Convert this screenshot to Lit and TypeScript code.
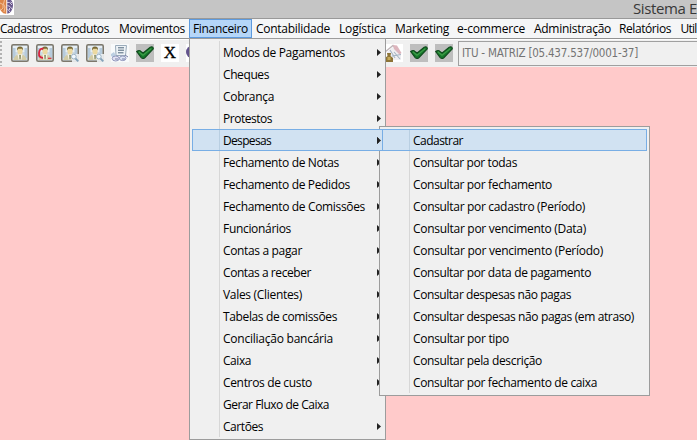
import { LitElement, html, css, svg, nothing } from "lit";
import { customElement, property } from "lit/decorators.js";

type Entry = [label: string, width: number, leaf?: boolean];

// label, text width, width of the whole bar entry
const BAR: [string, number, number][] = [
  ["Cadastros", 52, 57], ["Produtos", 48, 58], ["Movimentos", 66, 74], ["Financeiro", 55, 63],
  ["Contabilidade", 74, 83], ["Logística", 47, 56], ["Marketing", 54, 62], ["e-commerce", 68, 77],
  ["Administração", 77, 85], ["Relatórios", 52, 61.5], ["Util", 16, 21],
];
const MENU: Entry[] = [
  ["Modos de Pagamentos", 122], ["Cheques", 46], ["Cobrança", 51], ["Protestos", 49],
  ["Despesas", 48], ["Fechamento de Notas", 116], ["Fechamento de Pedidos", 127],
  ["Fechamento de Comissões", 142], ["Funcionários", 68], ["Contas a pagar", 79],
  ["Contas a receber", 88], ["Vales (Clientes)", 79], ["Tabelas de comissões", 114],
  ["Conciliação bancária", 110], ["Caixa", 28], ["Centros de custo", 89],
  ["Gerar Fluxo de Caixa", 106, true], ["Cartões", 40],
];
const SUBMENU: Entry[] = [
  ["Cadastrar", 50, true], ["Consultar por todas", 104, true],
  ["Consultar por fechamento", 139, true], ["Consultar por cadastro (Período)", 172, true],
  ["Consultar por vencimento (Data)", 173, true], ["Consultar por vencimento (Período)", 190, true],
  ["Consultar por data de pagamento", 178, true], ["Consultar despesas não pagas", 158, true],
  ["Consultar despesas não pagas (em atraso)", 221, true], ["Consultar por tipo", 96, true],
  ["Consultar pela descrição", 129, true], ["Consultar por fechamento de caixa", 184, true],
];

/** A label whose tracking is adjusted to fill a given width. */
@customElement("fit-label")
class FitLabel extends LitElement {
  @property() text = "";
  @property({ type: Number }) width = 0;
  static styles = css`
    :host { display: inline-block; white-space: pre; flex: none; }
  `;
  render() { return html`<span>${this.text}</span>`; }
  updated() {
    const span = this.renderRoot.querySelector("span") as HTMLElement;
    span.style.letterSpacing = "0";
    const natural = span.getBoundingClientRect().width;
    span.style.letterSpacing = `${(this.width - natural) / this.text.length}px`;
    this.style.width = `${this.width}px`;
  }
}

const frame = svg`
  <rect x=".75" y=".75" width="16.5" height="16.5" rx="1.5" fill="#cfdae2" stroke="#7d786c" stroke-width="1.5"/>
  <path d="M2 2H16V8H2Z" fill="#e6eef4"/><path d="M2 4H4.5V14H2ZM13.5 4H16V14H13.5Z" fill="#b6cbdc"/>
  <path d="M2.5 16Q3 11.5 7 10.5H11Q15 11.5 15.5 16Z" fill="#d2cca6"/>
  <path d="M6.5 10.3H11.5L10.3 16H7.7Z" fill="#f8f5e6"/><path d="M8.4 11H9.7L9.5 15.5H8.6Z" fill="#5d6638"/>
  <ellipse cx="9" cy="7" rx="2.6" ry="3.5" fill="#ecd9a0"/>
  <path d="M6.2 6.6Q5.4 2.4 9 2.4T11.9 6.6L11 4.8H7.3Z" fill="#7a6a35"/>`;
const lens = svg`<path d="M11 10H18V18H11Z" fill="#eef1f3" opacity=".9"/>
  <path d="M14 14L17.3 17.3" stroke="#83a2ba" stroke-width="1.8"/>
  <circle cx="12.8" cy="12.6" r="2.4" fill="#f0f8ff" stroke="#9cb3c3"/>`;
const icons: Record<string, unknown> = {
  user: frame,
  cuser: svg`${frame}<path d="M7.5 4.6Q3.4 4 3 9T7 13.8" fill="none" stroke="#d8213d" stroke-width="1.8"/>
    <path d="M12 14.3H15.5" stroke="#d4213d" stroke-width="1.1"/>`,
  find: svg`${frame}${lens}`,
  doc: svg`<rect width="18" height="18" fill="#f8fafb"/>
    <path d="M4.5 1.5H15.5L14.5 11.5H5Z" fill="#eef3f7" stroke="#9aabba"/>
    <path d="M7 3.8H13M7 6.2H13M7 8.8H12.5" stroke="#4f6679"/>
    <path d="M0 10L3 8L5 12L3 14L0 12Z" fill="#bccfe2"/>
    <ellipse cx="4.7" cy="14.5" rx="3.5" ry="2.5" fill="#e3e2f2" stroke="#9298bd"/>
    <ellipse cx="11.7" cy="14.3" rx="3.3" ry="2.3" fill="#dce4f4" stroke="#9298bd"/>
    <path d="M4 15H7M11 15H14M14 11L17 13" stroke="#7881a9"/>`,
  check: svg`<rect width="18" height="18" fill="#bebebe"/>
    <path d="M.8 7.5Q3.3 5.5 5.2 7.8L7.2 9L14.2 3.2Q17 2 17.3 4.8L8.8 13.7Q6.8 15.2 5.2 13.6Z" fill="#167a2c" stroke="#104b1d" stroke-width="1.2"/>
    <path d="M2.8 7.8L7 11.3L15.3 4.6" fill="none" stroke="#3f9c48" stroke-width="1.2"/>`,
  x: svg`<rect width="18" height="18" fill="#fff"/>`,
  ball: svg`<rect width="18" height="18" fill="#fff"/><circle cx="6.5" cy="8" r="6.5" fill="#62538c"/>`,
  house: svg`<rect width="18" height="18" fill="#fff"/>
    <path d="M1 9L8 3L16 10V16H4V9Z" fill="#efeef1"/>
    <path d="M0 8L8 1.5L11 5" fill="none" stroke="#bdb3b6" stroke-width="1.3"/>
    <path d="M8 1L12 1.5L16.5 9L14.5 10.5L9 5Z" fill="#dcb4bc"/>
    <path d="M9 8L15 15M7 12L16 10.5M5 6L10 14" stroke="#a5b4c2" stroke-width="1.1"/>
    <path d="M2 9H6L5.5 12L8 14V18H0V14L2.5 12Z" fill="#8d7437"/>
    <path d="M2.5 13H5.5V16H2.5Z" fill="#c7aa58"/>`,
};

@customElement("tool-icon")
class ToolIcon extends LitElement {
  @property() name = "";
  static styles = css`
    :host { display: grid; width: 18px; height: 18px; flex: none; }
    svg, b { grid-area: 1 / 1; }
    b { font: 400 17px/18px "Liberation Serif", serif; text-align: center; color: #000; -webkit-text-stroke: .3px #000; }
  `;
  render() {
    return html`<svg width="18" height="18" viewBox="0 0 18 18">${icons[this.name]}</svg>
      ${this.name === "x" ? html`<b>X</b>` : nothing}`;
  }
}

@customElement("menu-panel")
class MenuPanel extends LitElement {
  @property({ attribute: false }) items: Entry[] = [];
  @property({ type: Number }) active = -1;
  static styles = css`
    :host {
      display: block; box-sizing: border-box; border: 1px solid #9c9c9c; padding: 2px;
      background: linear-gradient(#d7d7d7, #d7d7d7) 29px 2px / 1px calc(100% - 4px) no-repeat #f0f0f0;
    }
    .row { display: flex; align-items: center; justify-content: space-between; height: 22px; box-sizing: border-box;
      border: 1px solid transparent; padding: 0 1px 0 30px; }
    .active { border-color: #78aee5; background: linear-gradient(#b9cfe2, #b9cfe2) 26px 0 / 1px 100% no-repeat #d1e2f2; }
    fit-label { padding-top: 2px; }
    svg { flex: none; }
  `;
  render() {
    return this.items.map(([label, width, leaf], i) => html`
      <div class="row ${i === this.active ? "active" : ""}">
        <fit-label .text=${label} .width=${width}></fit-label>
        ${leaf ? nothing : html`<svg width="4" height="7" viewBox="0 0 4 7"><path d="M0 0L4 3.5L0 7Z" fill="#222"/></svg>`}
      </div>`);
  }
}

@customElement("app-root")
class AppRoot extends LitElement {
  static styles = css`
    :host { display: flex; flex-direction: column; position: relative; width: 697px; height: 440px; overflow: hidden;
      background: #ffcaca; color: #000; font: 12px/20px "Open Sans", "Noto Sans", sans-serif; }
    .title { height: 18px; flex: none; background: #c5c5c5; border-bottom: 1px solid #999; display: flex; justify-content: space-between; }
    .logo { flex: none; }
    .caption { font-size: 15px; line-height: 17px; color: #383838; }
    .bar { height: 19px; flex: none; background: #f5f6f7; border-bottom: 1px solid #929292; display: flex; align-items: stretch; line-height: 19px; }
    .entry { flex: none; box-sizing: border-box; padding-left: 4px; }
    .entry:first-child { padding-left: 0; }
    .open { background: #b5d6f8; outline: 1px solid #5c9ade; outline-offset: -1px; }
    .tools { height: 28px; box-sizing: border-box; border-top: 1px solid #fff; flex: none; background: #f0f0f0; display: flex; align-items: center; }
    .grip { width: 2px; height: 25px; margin-right: 9px; background: repeating-linear-gradient(#b2b2b2 0 2px, transparent 2px 4px); }
    .set { display: flex; gap: 7px; padding-bottom: 1px; }
    .right { margin-left: 181px; }
    .field { margin-left: 5px; flex: 1; height: 25px; box-sizing: border-box; border: 1px solid #a0a0a0; border-right: 0; padding-left: 3px;
      color: #737373; line-height: 22px; font-size: 11.5px; font-stretch: condensed; font-family: "DejaVu Sans Condensed", "DejaVu Sans", sans-serif; }
    .menu { position: absolute; left: 189px; top: 38px; width: 197px; height: 402px; }
    .submenu { position: absolute; left: 379px; top: 126px; width: 271px; height: 270px; }
    .bridge { position: absolute; left: 379px; top: 129px; width: 3px; height: 22px; box-sizing: border-box;
      border: solid #78aee5; border-width: 1px 0; background: #d1e2f2; }
    .bridge svg { display: block; margin: 7px 0 0 -2px; }
  `;
  render() {
    const tools = ["user", "cuser", "find", "find", "doc", "check", "x", "ball"];
    return html`
      <div class="title">
        <svg class="logo" width="14" height="15" viewBox="0 0 14 15">
          <rect width="14" height="15" fill="#fff"/>
          <path d="M6.3 0V13.8Q3 14 1.5 11.5Q0 10 0 8V0Z" fill="#dd8447"/>
          <path d="M0 3L3 4.5V8L1 10M4.5 0L3.5 4L5 7L4 12" fill="none" stroke="#f6cfae" stroke-width=".8"/>
          <path d="M7.3 0H11Q13.6 3 12.8 7Q12 12.5 7.3 13.8Z" fill="#66558a"/>
          <path d="M7 2.5H9.5L12 5M7.5 5.5L10 6.5L12 9M7.5 9L10 12M9.5 8V10M10.5 2L12.5 3" fill="none" stroke="#ddd6ea" stroke-width=".9"/>
        </svg>
        <fit-label class="caption" .text=${"Sistema E"} .width=${64}></fit-label>
      </div>
      <div class="bar">${BAR.map(([label, width, slot]) => html`
        <div class="entry ${label === "Financeiro" ? "open" : ""}" style="width:${slot}px">
          <fit-label .text=${label} .width=${width}></fit-label>
        </div>`)}</div>
      <div class="tools">
        <div class="grip"></div>
        <div class="set">${tools.map((n) => html`<tool-icon .name=${n}></tool-icon>`)}</div>
        <div class="set right">${["house", "check", "check"].map((n) => html`<tool-icon .name=${n}></tool-icon>`)}</div>
        <div class="field"><fit-label .text=${"ITU - MATRIZ [05.437.537/0001-37]"} .width=${176}></fit-label></div>
      </div>
      <menu-panel class="menu" .items=${MENU} .active=${4}></menu-panel>
      <menu-panel class="submenu" .items=${SUBMENU} .active=${0}></menu-panel>
      <div class="bridge"><svg width="4" height="7" viewBox="0 0 4 7"><path d="M0 0L4 3.5L0 7Z" fill="#222"/></svg></div>`;
  }
}
